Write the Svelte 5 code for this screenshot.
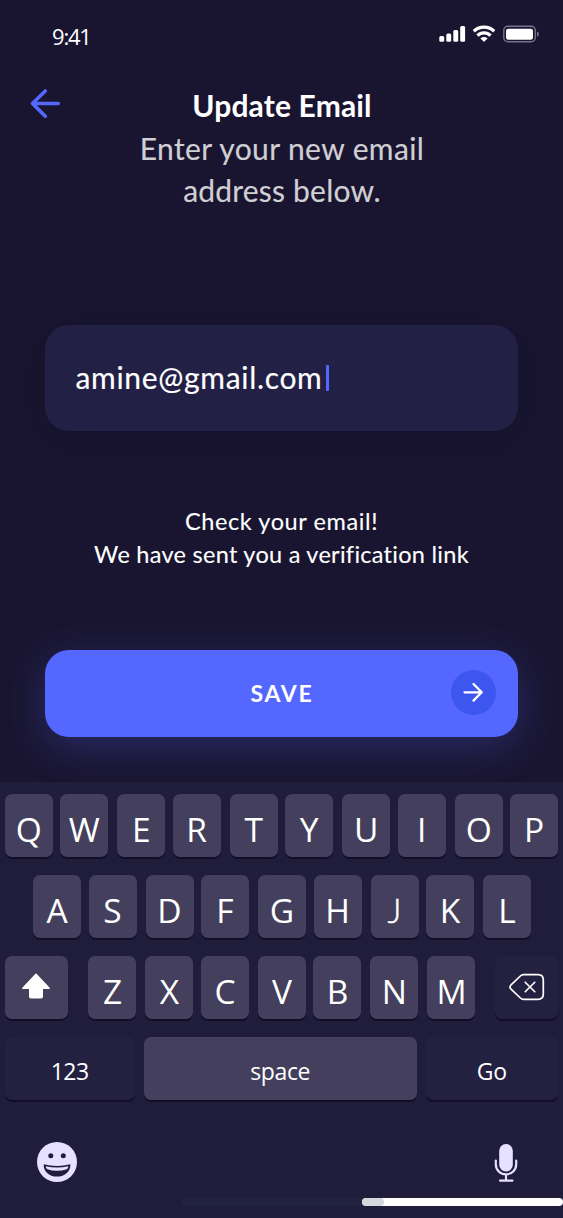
<script>
  const top = [...'QWERTYUIOP'];
  const middle = [...'ASDFGHJKL'];
  const bottom = [...'ZXCVBNM'];
</script>

<main>
  <div class="status">
    <span class="time">9:41</span>
    <svg width="102" height="20" viewBox="0 0 102 20">
      <g fill="#fff">
        <rect x="1.3" y="12" width="4.9" height="5.7" rx="1.5" />
        <rect x="8.3" y="9.4" width="4.9" height="8.3" rx="1.5" />
        <rect x="15.3" y="6" width="4.9" height="11.7" rx="1.5" />
        <rect x="22.2" y="2" width="4.9" height="15.7" rx="1.5" />
        <path d="M42 14.2 45.2 17.3a.6.6 0 0 0 .8 0L49.2 14.2A5.2 5.2 0 0 0 42 14.2Z" transform="translate(.4 .2)" />
      </g>
      <g fill="none" stroke="#fff" stroke-width="3.3">
        <path d="M35.8 7.2a15 15 0 0 1 20.4 0" />
        <path d="M39.5 11.6a9.3 9.3 0 0 1 13 0" />
      </g>
      <rect x="65.8" y="2.3" width="31.5" height="15.4" rx="4" fill="none" stroke="#75738a" stroke-width="1.4" />
      <rect x="68" y="4.7" width="27" height="11" rx="2.3" fill="#fff" />
      <path d="M99 7.5c2.6 1 2.6 4.2 0 5.2Z" fill="#75738a" />
    </svg>
  </div>

  <header>
    <svg class="back" width="32" height="32" viewBox="0 0 32 32" fill="none" stroke="#5468ff" stroke-width="3.6" stroke-linecap="round" stroke-linejoin="round">
      <path d="M29.3 15.5H3.5M16.3 3 3.5 15.5 16.3 28.2" />
    </svg>
    <div class="titles">
      <h1>Update Email</h1>
      <p class="l1">Enter your new email</p>
      <p class="l2">address below.</p>
    </div>
  </header>

  <div class="field"><span>amine@gmail.com</span><i></i></div>

  <div class="note">
    <p class="n1">Check your email!</p>
    <p class="n2">We have sent you a verification link</p>
  </div>

  <button class="save">
    <span class="label">SAVE</span>
    <span class="circle">
      <svg width="22" height="22" viewBox="0 0 22 22" fill="none" stroke="#fff" stroke-width="2.3" stroke-linecap="round" stroke-linejoin="round">
        <path d="M2.5 10.3H19.7M11.5 2 19.7 10.3 11.5 18.6" />
      </svg>
    </span>
  </button>

  <section class="keyboard">
    <div class="row">
      {#each top as k}<div class="key">{k}</div>{/each}
    </div>
    <div class="row second">
      {#each middle as k}<div class="key" class:short={k === 'J'}>{k}</div>{/each}
    </div>
    <div class="row third">
      <div class="key wide">
        <svg width="30" height="27" viewBox="0 0 30 27" fill="#fff">
          <path d="M14.2.9Q15 .2 15.8.9L28.7 14.7Q29.5 16 28 16H22V23.5Q22 25.5 20 25.5H10Q8 25.5 8 23.5V16H2Q.5 16 1.3 14.7Z" />
        </svg>
      </div>
      <div class="letters">
        {#each bottom as k}<div class="key">{k}</div>{/each}
      </div>
      <div class="key wide dark erase">
        <svg width="36" height="28" viewBox="0 0 36 28" fill="none" stroke="#fff" stroke-linejoin="round" stroke-linecap="round">
          <path stroke-width="1.7" d="M14.5 1.7H29Q34.3 1.7 34.3 7V21Q34.3 26.3 29 26.3H14.5Q12.8 26.3 11.4 25L1.8 15.8Q.2 14 1.8 12.2L11.4 3Q12.8 1.7 14.5 1.7Z" />
          <path stroke-width="1.6" d="m16.2 9.2 9.6 9.6m0-9.6-9.6 9.6" />
        </svg>
      </div>
    </div>
    <div class="row fourth">
      <div class="key dark fn">123</div>
      <div class="key space">space</div>
      <div class="key dark go">Go</div>
    </div>
    <div class="tools">
      <svg width="40" height="40" viewBox="0 0 40 40">
        <circle cx="20" cy="20" r="20" fill="#e5e1ff" />
        <g fill="#201d3a">
          <circle cx="13.8" cy="13.7" r="2.5" />
          <circle cx="26.3" cy="13.7" r="2.5" />
          <path d="M6.7 22.2Q20 25.7 33.4 22.2C33.8 29 28 34.6 20 34.6S6.2 29 6.7 22.2Z" />
        </g>
        <path d="M8.7 24.2Q20 26.6 31.4 24.2Q31.2 26.3 29.8 27.2Q20 30.4 10.3 27.2Q8.9 26.3 8.7 24.2Z" fill="#e5e1ff" />
      </svg>
      <svg width="24" height="40" viewBox="0 0 24 40">
        <rect x="5.2" y="1" width="13.6" height="27.5" rx="6.8" fill="#e5e1ff" />
        <path d="M1.8 17.5v3.7a10.2 10.2 0 0 0 20.4 0v-3.7M12 31.4v6M6 37.6h12.5" fill="none" stroke="#e5e1ff" stroke-width="2.2" stroke-linecap="round" />
      </svg>
    </div>
    <div class="home"><div class="bar"><div class="thumb"></div></div></div>
  </section>
</main>

<style>
  :global(body) { margin: 0; background: #191530; }
  * { box-sizing: border-box; }
  main {
    width: 563px; height: 1218px; overflow: hidden;
    display: flex; flex-direction: column;
    background: #191530; color: #fff;
    font-family: Lato, sans-serif;
  }
  h1, p { margin: 0; white-space: nowrap; }
  .status {
    height: 80px; flex: none; display: flex; justify-content: space-between;
    padding: 24px 23px 0 52px;
  }
  .time { font: 22px/25px "Open Sans", sans-serif; letter-spacing: -1.2px; }
  header { height: 245px; flex: none; display: flex; padding-left: 29px; }
  .back { margin-top: 8px; flex: none; }
  .titles {
    width: 442px; margin-top: 4px; display: flex; flex-direction: column;
    align-items: center; font-size: 30px; line-height: 42.5px;
  }
  h1 { font-size: 30px; line-height: 43px; font-weight: 700; letter-spacing: .15px; }
  .titles p { color: #d0cfd4; -webkit-text-stroke: .15px #d0cfd4; }
  .l1 { letter-spacing: .4px; }
  .l2 { letter-spacing: .2px; line-height: 41.5px; }
  .field {
    height: 105.5px; flex: none; width: 472.5px; margin: 0 0 0 45px; padding: 0 0 2px 30.5px; border-radius: 24px;
    display: flex; align-items: center; background: #232046;
    box-shadow: 0 8px 40px rgba(13, 10, 30, .25);
    font-size: 30px; letter-spacing: .68px; -webkit-text-stroke: .15px #fff;
  }
  .field span { line-height: 40px; }
  .field i { width: 3px; height: 26px; background: #5468ff; margin: 2px 0 0 4px; border-radius: 1px; }
  .note {
    height: 219px; flex: none; padding-top: 74.5px; display: flex; flex-direction: column;
    align-items: center; font-size: 23.5px; line-height: 33px; -webkit-text-stroke: .12px #fff;
  }
  .n1 { letter-spacing: .6px; }
  .n2 { letter-spacing: .28px; }
  .save {
    height: 87px; flex: none; width: 472.5px; margin: 0 0 0 45px; padding: 0 21.5px 1px 0; border: 0; border-radius: 24px;
    display: grid; grid-template-columns: 1fr 45px; align-items: center;
    background: #5468ff; color: #fff; font: 700 23px/30px Lato, sans-serif;
    box-shadow: 0 10px 40px rgba(84, 104, 255, .27);
  }
  .label { padding: 0 0 0 68px; letter-spacing: 1.7px; }
  .circle {
    width: 45px; height: 45px; border-radius: 50%; background: #3d56f0;
    display: flex; align-items: center; justify-content: center; padding-right: 1px;
  }
  .keyboard {
    margin-top: 45px; height: 436.5px; flex: none; padding-top: 12px;
    background: #201d3a; display: flex; flex-direction: column;
    font-family: "Open Sans", sans-serif;
  }
  .row { display: flex; height: 63px; margin-bottom: 18px; padding-left: 4.7px; flex: none; }
  .second { padding-left: 33px; }
  .key {
    width: 48px; height: 63px; flex: none; border-radius: 7px; background: #433f5c;
    display: flex; align-items: center; justify-content: center;
    font-size: 33.5px; line-height: 40px; padding: 7px 0 0;
    box-shadow: 0 2px 0 #120e2a; margin-right: 7.5px;
  }
  .key:nth-child(even) { margin-right: 9px; }
  .short { font-family: Lato, sans-serif; font-weight: 300; -webkit-text-stroke: .5px #fff; }
  .letters { display: flex; width: 406.3px; flex: none; }
  .letters .key:nth-child(odd) { margin-right: 9px; }
  .letters .key:nth-child(even) { margin-right: 7.5px; }
  .letters .key:nth-child(6) { margin-right: 9px; }
  .row .wide { width: 63px; padding: 0 0 1px; margin-right: 20.8px; }
  .row .erase { padding: 0 0 0 1px; }
  .row .dark { background: #24203f; }
  .fourth .key { font-size: 23px; padding: 5px 0 0; }
  .fourth .fn { width: 130px; margin-right: 9px; letter-spacing: -.5px; }
  .fourth .space { width: 273px; margin-right: 9px; letter-spacing: -.4px; }
  .fourth .go { width: 132px; letter-spacing: -.3px; }
  .tools { display: flex; justify-content: space-between; padding: 24px 45px 0 37px; }
  .tools svg:last-child { margin-top: 1px; }
  .home { margin: 15.5px 0 0 182px; height: 8px; border-radius: 4px; background: #22243f; display: flex; justify-content: flex-end; flex: none; }
  .bar { width: 201.5px; background: #fff; border-radius: 4px; overflow: hidden; }
  .thumb { width: 22px; height: 8px; border-radius: 4px; background: #d5d7dd; }
</style>
